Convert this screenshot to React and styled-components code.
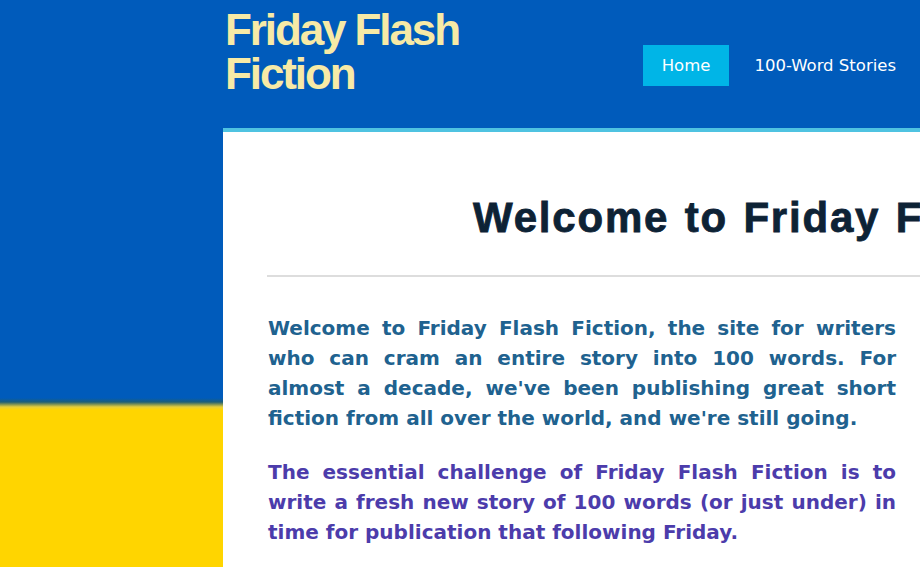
import styled, { createGlobalStyle } from "styled-components";

const GlobalStyle = createGlobalStyle`
  html, body {
    margin: 0;
    padding: 0;
    overflow: hidden;
  }
  body {
    min-height: 567px;
    background: linear-gradient(
      to bottom,
      #005bbb 0,
      #005bbb 398px,
      #1d5f78 402px,
      #6f8a58 404px,
      #e6cf3a 407px,
      #ffd500 410px,
      #ffd500 100%
    );
    font-family: "DejaVu Sans", Verdana, sans-serif;
  }
`;

const navItems = [
  { label: "Home", active: true },
  { label: "100-Word Stories", active: false },
];

const App = () => {
  return (
    <>
      <GlobalStyle />
      <Page>
        <Sidebar />
        <Main>
          <Header>
            <SiteTitle>
              Friday Flash
              <br />
              Fiction
            </SiteTitle>
            <Nav>
              {navItems.map((item) => (
                <NavLink key={item.label} href="#" $active={item.active}>
                  {item.label}
                </NavLink>
              ))}
            </Nav>
          </Header>

          <Content>
            <PageHeading>Welcome to Friday Flash Fiction</PageHeading>
            <Rule />
            <Para $color="#20628f">
              Welcome to Friday Flash Fiction, the site for writers who can
              cram an entire story into 100 words. For almost a decade, we've
              been publishing great short fiction from all over the world, and
              we're still going.
            </Para>
            <Para $color="#4c3cab">
              The essential challenge of Friday Flash Fiction is to write a
              fresh new story of 100 words (or just under) in time for
              publication that following Friday.
            </Para>
          </Content>
        </Main>
      </Page>
    </>
  );
};

const Page = styled.div`
  display: grid;
  grid-template-columns: 223px 1fr;
  min-height: 567px;
`;

const Sidebar = styled.aside``;

const Main = styled.div`
  display: flex;
  flex-direction: column;
  min-width: 0;
`;

const Header = styled.header`
  height: 128px;
  background: #005bbb;
  display: flex;
  justify-content: space-between;
  align-items: flex-start;
  padding: 0 24px 0 2px;
`;

const SiteTitle = styled.h1`
  margin: 0;
  padding-top: 8px;
  font-family: "Liberation Sans", Arial, sans-serif;
  font-size: 44px;
  line-height: 44px;
  font-weight: bold;
  letter-spacing: -2.1px;
  color: #f7eaa6;
`;

const Nav = styled.nav`
  display: flex;
  align-items: center;
  gap: 25px;
  margin-top: 45px;
`;

const NavLink = styled.a`
  display: block;
  height: 41px;
  line-height: 41px;
  padding: ${({ $active }) => ($active ? "0 19px" : "0")};
  background: ${({ $active }) => ($active ? "#00b5e7" : "transparent")};
  color: #ffffff;
  font-family: "DejaVu Sans", Verdana, sans-serif;
  font-size: 16.5px;
  text-decoration: none;
`;

const Content = styled.main`
  flex: 1;
  background: #ffffff;
  border-top: 4px solid #4fc3e1;
  padding: 0 0 40px 44px;
`;

const PageHeading = styled.h2`
  margin: 62px 0 0;
  padding-left: 206px;
  white-space: nowrap;
  font-family: "Liberation Sans", Arial, sans-serif;
  font-size: 42px;
  line-height: 48px;
  font-weight: bold;
  letter-spacing: 1.8px;
  word-spacing: 2px;
  -webkit-text-stroke: 0.8px #0d2235;
  color: #0d2235;
`;

const Rule = styled.hr`
  margin: 33px 0 36px;
  border: 0;
  height: 2px;
  background: #dddddd;
`;

const Para = styled.p`
  width: 628px;
  margin: 0 0 24px 1px;
  font-family: "DejaVu Sans", Verdana, sans-serif;
  font-size: 20px;
  line-height: 30px;
  font-weight: bold;
  text-align: justify;
  color: ${({ $color }) => $color};
`;

export default App;
